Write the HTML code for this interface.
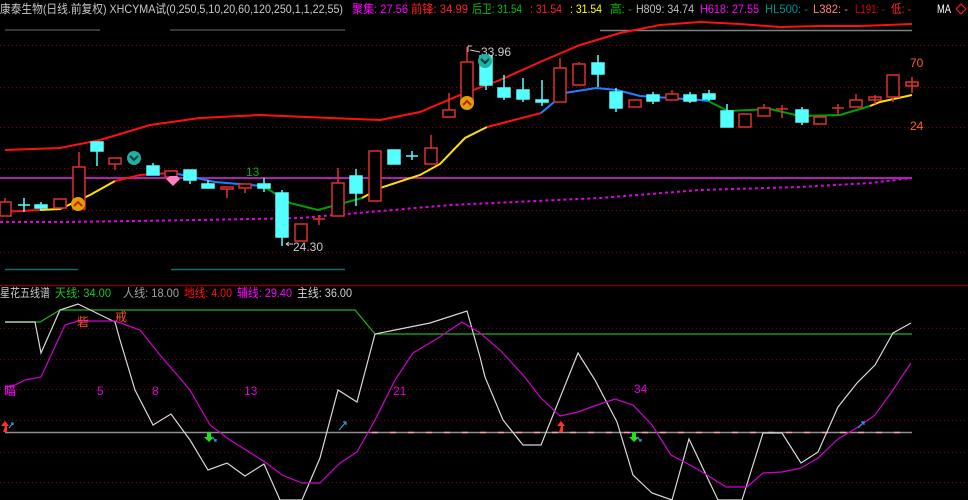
<!DOCTYPE html>
<html><head><meta charset="utf-8"><style>
html,body{margin:0;padding:0;background:#000;overflow:hidden}
svg{display:block}
text{font-family:"Liberation Sans","Noto Sans CJK SC",sans-serif;font-size:12px}
</style></head><body>
<svg width="968" height="500" viewBox="0 0 968 500" xmlns="http://www.w3.org/2000/svg">
<rect width="968" height="500" fill="#000"/>
<!-- header -->
<text x="0" y="13" fill="#c8c8c8" textLength="343" lengthAdjust="spacingAndGlyphs">康泰生物(日线.前复权) XHCYMA试(0,250,5,10,20,60,120,250,1,1,22,55)</text>
<text x="352" y="13" fill="#ff00ff" textLength="56" lengthAdjust="spacingAndGlyphs">聚集: 27.56</text>
<text x="411" y="13" fill="#ff2020" textLength="57" lengthAdjust="spacingAndGlyphs">前锋: 34.99</text>
<text x="472" y="13" fill="#00c000" textLength="50" lengthAdjust="spacingAndGlyphs">后卫: 31.54</text>
<text x="530" y="13" fill="#ff2020" textLength="32" lengthAdjust="spacingAndGlyphs">: 31.54</text>
<text x="570" y="13" fill="#ffff00" textLength="32" lengthAdjust="spacingAndGlyphs">: 31.54</text>
<text x="610" y="13" fill="#00c000" textLength="22" lengthAdjust="spacingAndGlyphs">高: -</text>
<text x="636" y="13" fill="#c0c0c0" textLength="58" lengthAdjust="spacingAndGlyphs">H809: 34.74</text>
<text x="700" y="13" fill="#ff00ff" textLength="59" lengthAdjust="spacingAndGlyphs">H618: 27.55</text>
<text x="765" y="13" fill="#009090" textLength="43" lengthAdjust="spacingAndGlyphs">HL500: -</text>
<text x="813" y="13" fill="#ff8080" textLength="35" lengthAdjust="spacingAndGlyphs">L382: -</text>
<text x="855" y="13" fill="#e00000" textLength="30" lengthAdjust="spacingAndGlyphs">L191: -</text>
<text x="891" y="13" fill="#ff2020" textLength="20" lengthAdjust="spacingAndGlyphs">低: -</text>
<text x="937" y="13" fill="#ffffff" textLength="14" lengthAdjust="spacingAndGlyphs">MA</text>
<path d="M956 9 L961 4 L966 9 L961 14 Z" fill="none" stroke="#ff2020"/>
<!-- grid main -->
<g stroke="#8a0000" stroke-dasharray="1,3" stroke-width="1">
<line x1="0" y1="45.5" x2="968" y2="45.5"/><line x1="0" y1="87.5" x2="968" y2="87.5"/>
<line x1="0" y1="127.5" x2="968" y2="127.5"/><line x1="0" y1="168.5" x2="968" y2="168.5"/>
<line x1="0" y1="210.5" x2="968" y2="210.5"/><line x1="0" y1="252.5" x2="968" y2="252.5"/>
<line x1="0" y1="328.5" x2="968" y2="328.5"/><line x1="0" y1="359.5" x2="968" y2="359.5"/>
<line x1="0" y1="389.5" x2="968" y2="389.5"/><line x1="0" y1="420.5" x2="968" y2="420.5"/>
<line x1="0" y1="452.5" x2="968" y2="452.5"/><line x1="0" y1="482.5" x2="968" y2="482.5"/>
</g>
<line x1="0" y1="285.5" x2="968" y2="285.5" stroke="#800000" stroke-width="1.5"/>
<!-- small gray header lines -->
<line x1="5" y1="30" x2="100" y2="30" stroke="#707070"/>
<line x1="170" y1="30" x2="345" y2="30" stroke="#707070"/>
<line x1="600" y1="30.5" x2="912" y2="30.5" stroke="#808080" stroke-width="1.5"/>
<line x1="5" y1="269.5" x2="78" y2="269.5" stroke="#1a6a6a" stroke-width="1.5"/>
<line x1="171" y1="269.5" x2="345" y2="269.5" stroke="#1a6a6a" stroke-width="1.5"/>
<!-- magenta lines -->
<line x1="0" y1="178" x2="912" y2="178" stroke="#b020b0" stroke-width="2"/>
<polyline fill="none" stroke="#e000e0" stroke-width="2" stroke-dasharray="3,3" points="0,222 65,222 200,220 300,218 450,205 600,198 700,190 800,187 870,183 912,178"/>
<!-- upper red band -->
<polyline fill="none" stroke="#ff1010" stroke-width="2" points="5,150 60,148 100,140 150,125 200,118 260,115 330,118 380,120 420,112 460,95 500,80 540,62 580,45 620,33 660,25 700,22 740,24 780,27 820,26 860,26 912,24"/>
<!-- MA multicolor -->
<polyline fill="none" stroke="#ff1010" stroke-width="2" points="0,212 40,210"/>
<polyline fill="none" stroke="#ffe000" stroke-width="2" points="40,210 60,209 90,195 115,181"/>
<polyline fill="none" stroke="#ff1010" stroke-width="2" points="115,181 140,175 170,173 178,174"/>
<polyline fill="none" stroke="#2080ff" stroke-width="2" points="178,174 215,182 263,186"/>
<polyline fill="none" stroke="#00a000" stroke-width="2" points="263,186 290,203 318,210 340,204 362,198"/>
<polyline fill="none" stroke="#ffe000" stroke-width="2" points="362,198 380,188 420,175 440,164 465,138 487,127"/>
<polyline fill="none" stroke="#ff1010" stroke-width="2" points="487,127 541,113"/>
<polyline fill="none" stroke="#2080ff" stroke-width="2" points="541,113 565,93 596,88 617,90 640,96 700,100 708,101"/>
<polyline fill="none" stroke="#00a000" stroke-width="2" points="708,101 728,111 770,109 800,116 840,115 870,106"/>
<polyline fill="none" stroke="#ffe000" stroke-width="2" points="870,106 880,102 912,95"/>
<!-- candles -->
<g stroke-width="1.5">
<g stroke="#e03030" fill="#000">
<rect x="0" y="202" width="11" height="14"/><line x1="5" y1="198" x2="5" y2="202"/>
<rect x="54" y="199" width="12" height="9"/>
<line x1="79" y1="152" x2="79" y2="167"/><rect x="73" y="167" width="12" height="42"/>
<rect x="109" y="158" width="12" height="6"/><line x1="115" y1="164" x2="115" y2="170"/>
<rect x="165" y="171" width="12" height="6"/>
<rect x="221" y="187" width="12" height="2"/><line x1="227" y1="189" x2="227" y2="198"/>
<rect x="239" y="184" width="12" height="4"/><line x1="245" y1="188" x2="245" y2="193"/>
<rect x="295" y="224" width="12" height="17"/>
<line x1="313" y1="219" x2="325" y2="219"/><line x1="319" y1="215" x2="319" y2="225"/>
<line x1="338" y1="168" x2="338" y2="183"/><rect x="332" y="183" width="12" height="33"/>
<rect x="369" y="151" width="12" height="50"/>
<line x1="431" y1="135" x2="431" y2="148"/><rect x="425" y="148" width="12" height="16"/>
<line x1="449" y1="93" x2="449" y2="110"/><rect x="443" y="110" width="12" height="7"/>
<line x1="467" y1="47" x2="467" y2="62"/><rect x="461" y="62" width="12" height="39"/>
<line x1="560" y1="58" x2="560" y2="68"/><rect x="554" y="68" width="12" height="34"/>
<rect x="573" y="64" width="12" height="21"/><line x1="579" y1="62" x2="579" y2="64"/>
<rect x="629" y="100" width="12" height="7"/>
<rect x="666" y="94" width="12" height="6"/><line x1="672" y1="90" x2="672" y2="94"/>
<rect x="739" y="114" width="12" height="13"/>
<rect x="758" y="108" width="12" height="8"/><line x1="764" y1="104" x2="764" y2="108"/>
<line x1="776" y1="109" x2="788" y2="109"/><line x1="782" y1="105" x2="782" y2="118"/>
<rect x="814" y="117" width="12" height="7"/>
<line x1="832" y1="108" x2="844" y2="108"/><line x1="838" y1="104" x2="838" y2="115"/>
<rect x="850" y="100" width="12" height="7"/><line x1="856" y1="94" x2="856" y2="100"/>
<rect x="869" y="97" width="12" height="3"/><line x1="875" y1="95" x2="875" y2="104"/>
<rect x="887" y="75" width="12" height="22"/><line x1="893" y1="97" x2="893" y2="102"/>
<rect x="906" y="82" width="12" height="4"/><line x1="912" y1="77" x2="912" y2="93"/>
</g>
<g stroke="#54ffff" fill="#54ffff">
<line x1="18" y1="205" x2="30" y2="205"/><line x1="24" y1="198" x2="24" y2="212"/>
<rect x="35" y="205" width="12" height="3"/><line x1="41" y1="202" x2="41" y2="210"/>
<rect x="91" y="142" width="12" height="9"/><line x1="97" y1="151" x2="97" y2="166"/>
<rect x="147" y="166" width="12" height="9"/><line x1="153" y1="163" x2="153" y2="166"/>
<rect x="184" y="170" width="12" height="10"/><line x1="190" y1="180" x2="190" y2="184"/>
<rect x="202" y="184" width="12" height="4"/><line x1="208" y1="180" x2="208" y2="184"/>
<rect x="258" y="184" width="12" height="4"/><line x1="264" y1="178" x2="264" y2="192"/>
<rect x="276" y="193" width="12" height="44"/><line x1="282" y1="190" x2="282" y2="246"/>
<rect x="350" y="176" width="12" height="17"/><line x1="356" y1="169" x2="356" y2="206"/>
<rect x="388" y="150" width="12" height="14"/>
<line x1="406" y1="156" x2="418" y2="156"/><line x1="412" y1="151" x2="412" y2="160"/>
<rect x="480" y="56" width="12" height="29"/><line x1="486" y1="85" x2="486" y2="90"/>
<rect x="498" y="88" width="12" height="9"/><line x1="504" y1="75" x2="504" y2="100"/>
<rect x="517" y="90" width="12" height="9"/><line x1="523" y1="78" x2="523" y2="102"/>
<rect x="536" y="100" width="12" height="2"/><line x1="542" y1="80" x2="542" y2="106"/>
<rect x="592" y="63" width="12" height="11"/><line x1="598" y1="55" x2="598" y2="87"/>
<rect x="610" y="92" width="12" height="16"/><line x1="616" y1="88" x2="616" y2="112"/>
<rect x="647" y="95" width="12" height="6"/><line x1="653" y1="92" x2="653" y2="104"/>
<rect x="684" y="95" width="12" height="6"/><line x1="690" y1="92" x2="690" y2="103"/>
<rect x="703" y="94" width="12" height="5"/><line x1="709" y1="90" x2="709" y2="101"/>
<rect x="721" y="111" width="12" height="16"/><line x1="727" y1="104" x2="727" y2="111"/>
<rect x="796" y="110" width="12" height="12"/><line x1="802" y1="107" x2="802" y2="125"/>
</g>
</g>
<!-- labels main -->
<text x="246" y="176" fill="#00b000">13</text>
<text x="293" y="251" fill="#c8c8c8">24.30</text>
<path d="M286 244 L293 244 M286 244 L289 242 M286 244 L289 246" stroke="#c8c8c8" fill="none"/>
<text x="481" y="56" fill="#c8c8c8">33.96</text>
<path d="M468 46 L468 52 M468 46 L472 46 M470 50 L480 52" stroke="#c8c8c8" fill="none"/>
<text x="910" y="67" fill="#ff6020">70</text>
<text x="910" y="130" fill="#ff6020">24</text>
<!-- icons -->
<g>
<circle cx="78" cy="204" r="7" fill="#e0a000"/><path d="M74 206 L78 202 L82 206" stroke="#c02000" stroke-width="2" fill="none"/>
<circle cx="467" cy="103" r="7" fill="#e0a000"/><path d="M463 105 L467 101 L471 105" stroke="#c02000" stroke-width="2" fill="none"/>
<circle cx="134" cy="158" r="7" fill="#20b0a0"/><path d="M130 156 L134 160 L138 156" stroke="#004040" stroke-width="2" fill="none"/>
<circle cx="485" cy="61" r="7" fill="#20b0a0"/><path d="M481 59 L485 63 L489 59" stroke="#004040" stroke-width="2" fill="none"/>
<path d="M166 179 L170 176 L177 176 L180 179 L173 186 Z" fill="#ff80c0"/>
</g>
<!-- lower panel header -->
<text x="0" y="297" fill="#c8c8c8" textLength="50" lengthAdjust="spacingAndGlyphs">星花五线谱</text>
<text x="55" y="297" fill="#20c020" textLength="56" lengthAdjust="spacingAndGlyphs">天线: 34.00</text>
<text x="123" y="297" fill="#a0a0a0" textLength="56" lengthAdjust="spacingAndGlyphs">人线: 18.00</text>
<text x="184" y="297" fill="#ff1010" textLength="48" lengthAdjust="spacingAndGlyphs">地线: 4.00</text>
<text x="237" y="297" fill="#ff00ff" textLength="55" lengthAdjust="spacingAndGlyphs">辅线: 29.40</text>
<text x="297" y="297" fill="#d0d0d0" textLength="55" lengthAdjust="spacingAndGlyphs">主线: 36.00</text>
<!-- lower lines -->
<line x1="5" y1="432.5" x2="912" y2="432.5" stroke="#909090" stroke-width="1.5"/>
<line x1="372" y1="432.5" x2="912" y2="432.5" stroke="#ffa0a0" stroke-width="1.5" stroke-dasharray="6,12"/>
<polyline fill="none" stroke="#20b020" stroke-width="1.2" points="5,322 40,322 60,310 355,310 375,334 912,334"/>
<polyline fill="none" stroke="#d8d8d8" stroke-width="1.2" points="5,322 35,322 41,353 60,310 78,304 115,322 120,340 135,390 153,425 171,414 190,440 208,470 227,463 245,476 264,464 280,500 302,500 320,458 338,390 357,402 375,334 395,330 430,323 467,311 480,357 485,377 503,420 523,445 541,445 578,353 595,380 617,422 633,475 652,493 672,500 689,439 718,500 742,500 763,433 782,433 801,463 818,452 838,407 857,383 875,365 893,333 911,323"/>
<polyline fill="none" stroke="#d000d0" stroke-width="1.2" points="5,387 15,385 25,380 41,377 65,325 78,321 115,321 140,330 160,355 190,390 210,425 230,440 265,462 282,475 302,483 320,483 340,463 357,452 375,420 395,380 413,353 435,340 462,322 480,333 500,350 523,375 541,398 560,416 578,412 597,405 615,399 633,405 652,425 671,455 690,465 707,475 726,487 747,487 763,473 782,472 801,468 818,458 838,439 858,427 875,415 893,390 911,363"/>
<!-- lower labels -->
<text x="4" y="395" fill="#ff00ff">瞄</text>
<text x="97" y="395" fill="#e000e0">5</text>
<text x="152" y="395" fill="#e000e0">8</text>
<text x="244" y="395" fill="#e000e0">13</text>
<text x="393" y="395" fill="#e000e0">21</text>
<text x="634" y="393" fill="#e000e0">34</text>
<text x="77" y="326" fill="#ff5020">砦</text>
<text x="115" y="321" fill="#ff5020">戒</text>
<!-- arrows -->
<path d="M5 426 L1 426 L5 421 L9 426 L7 426 L7 432 L3 432 Z" fill="#ff3030"/>
<path d="M561 426 L557 426 L561 421 L565 426 L563 426 L563 432 L559 432 Z" fill="#ff3030"/>
<path d="M207 432 L211 432 L211 437 L214 437 L209 442 L204 437 L207 437 Z" fill="#20e020"/>
<path d="M632 432 L636 432 L636 437 L639 437 L634 442 L629 437 L632 437 Z" fill="#20e020"/>
<g stroke="#20a0e0" stroke-width="1.2" fill="none">
<path d="M9 428 L13 423 M11 423 L13 423 L13 425"/>
<path d="M339 430 L346 422 M343 422 L346 422 L346 425"/>
<path d="M212 437 L216 441 M214 441 L216 441 L216 439"/>
<path d="M637 437 L641 441 M639 441 L641 441 L641 439"/>
<path d="M858 428 L864 422 M861 422 L864 422 L864 425"/>
</g>
</svg>
</body></html>
